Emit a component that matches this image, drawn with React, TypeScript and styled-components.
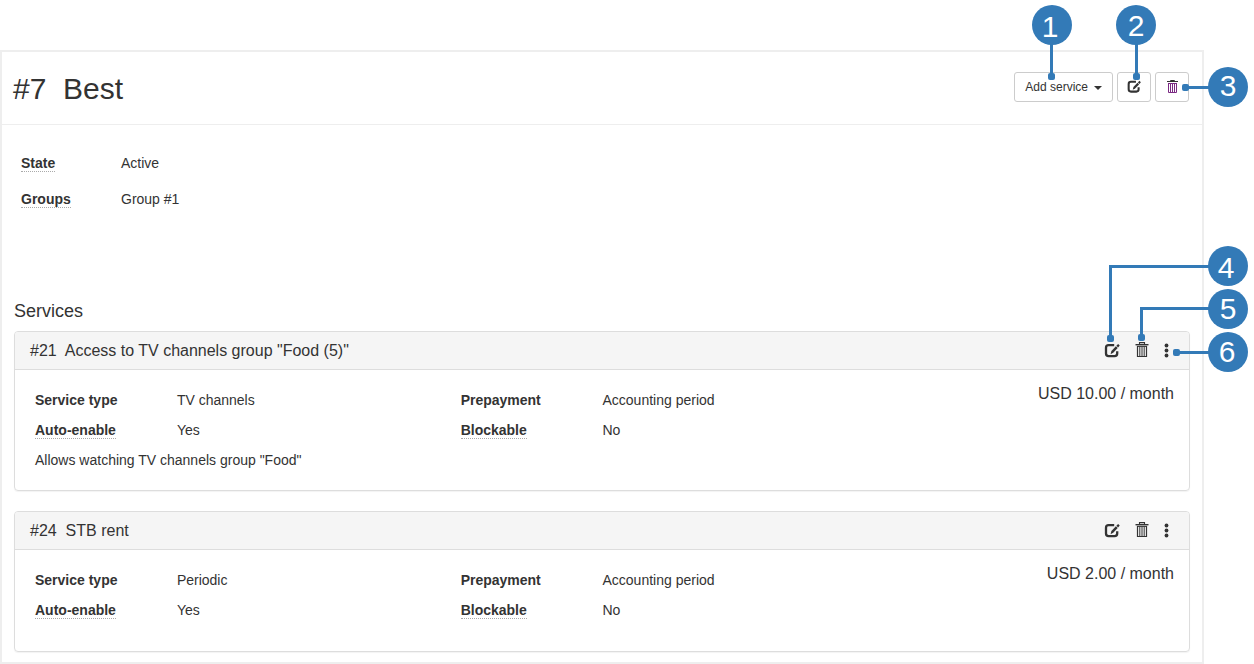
import React from 'react';
import styled, { createGlobalStyle } from 'styled-components';

const GlobalStyle = createGlobalStyle`
  *, *::before, *::after { box-sizing: border-box; }
  body {
    margin: 0;
    background: #fff;
    color: #333;
    font-family: "Liberation Sans", Arial, sans-serif;
    font-size: 14px;
    line-height: 20px;
  }
  button { font-family: inherit; color: inherit; cursor: pointer; }
`;

const Page = styled.div`
  position: relative;
  padding: 50px 50px 0 0;
`;

const Frame = styled.main`
  border: 2px solid #eee;
`;

const Header = styled.header`
  display: flex;
  align-items: flex-start;
  justify-content: space-between;
  padding: 20px 13px 18px 11px;
  border-bottom: 1px solid #eee;
`;

const Title = styled.h1`
  margin: 0;
  font-size: 30px;
  font-weight: 400;
  line-height: 34px;
`;

const Toolbar = styled.div`
  display: flex;
  gap: 4px;
`;

const ToolButton = styled.button<{ $square?: boolean }>`
  display: flex;
  align-items: center;
  justify-content: center;
  height: 30px;
  padding: ${(p) => (p.$square ? '0' : '0 10px')};
  width: ${(p) => (p.$square ? '34px' : 'auto')};
  font-size: 12px;
  line-height: 18px;
  background: #fff;
  border: 1px solid #ccc;
  border-radius: 3px;
`;

const Caret = styled.span`
  margin-left: 6px;
  margin-top: 2px;
  border-top: 4px solid #333;
  border-left: 4px solid transparent;
  border-right: 4px solid transparent;
`;

const Info = styled.dl`
  display: grid;
  grid-template-columns: 100px 1fr;
  align-content: start;
  row-gap: 16px;
  min-height: 176px;
  margin: 0;
  padding: 28px 19px 0;
`;

const Term = styled.dt`
  font-weight: 700;
`;

const Value = styled.dd`
  margin: 0;
`;

const Hint = styled.abbr`
  text-decoration: none;
  border-bottom: 1px dotted #aaa;
  cursor: help;
`;

const Services = styled.section`
  padding: 0 12px 10px;
`;

const SectionTitle = styled.h2`
  margin: 0 0 10px;
  font-size: 18px;
  font-weight: 400;
  line-height: 20px;
`;

const CardList = styled.div`
  display: grid;
  gap: 20px;
`;

const Card = styled.article`
  border: 1px solid #ddd;
  border-radius: 4px;
  box-shadow: 0 1px 1px rgba(0, 0, 0, 0.05);
`;

const CardHeader = styled.div`
  display: flex;
  align-items: center;
  justify-content: space-between;
  height: 38px;
  padding: 1px 20px 0 15px;
  background: #f5f5f5;
  border-bottom: 1px solid #ddd;
  border-radius: 3px 3px 0 0;
`;

const CardTitle = styled.h3`
  margin: 0;
  font-size: 16px;
  font-weight: 400;
  line-height: 20px;
`;

const CardActions = styled.div`
  display: flex;
  align-items: center;
  gap: 12px;
`;

const IconButton = styled.button`
  display: flex;
  padding: 0;
  background: none;
  border: 0;
`;

const CardBody = styled.div`
  display: grid;
  grid-template-columns: 3fr 1fr;
  column-gap: 4px;
  padding: 12px 15px 20px 20px;
`;

const Details = styled.div`
  min-height: 69px;
  padding-top: 8px;
`;

const Fields = styled.dl`
  display: grid;
  grid-template-columns: 1fr 2fr 1fr 2fr;
  row-gap: 10px;
  margin: 0;
`;

const Description = styled.p`
  margin: 10px 0 0;
`;

const Price = styled.div`
  font-size: 16px;
  line-height: 24px;
  text-align: right;
`;

const CalloutLayer = styled.svg`
  position: absolute;
  top: 0;
  right: 0;
  pointer-events: none;
  font-size: 30px;
  font-family: "Liberation Sans", Arial, sans-serif;
`;

const EditIcon = ({ size = 18 }: { size?: number }) => (
  <svg width={size} height={size} viewBox="0 0 18 18" fill="none" aria-hidden="true">
    <path d="M11.2 3.2H5.6Q3 3.2 3 5.8V11.6Q3 14.2 5.6 14.2H11.6Q14.2 14.2 14.2 11.6V9.2" stroke="#333" strokeWidth="2.3" />
    <path d="M7.6 12.2L8.4 8.9L12.9 4.3L14.7 6.1L10.2 10.7Z" fill="#333" />
    <path d="M13.4 3.8L15.1 2L16.7 3.6L15.1 5.6Z" fill="#333" />
  </svg>
);

const TrashIcon = () => (
  <svg width="18" height="18" viewBox="0 0 18 18" fill="none" aria-hidden="true">
    <path d="M6.5 2.2V.6H11.5V2.2" stroke="#333" strokeWidth="1.1" />
    <path d="M2.5 2H15.5V3.4H2.5Z" fill="#333" />
    <path d="M4.5 4V14.5H13.5V4" stroke="#333" strokeWidth="1.2" />
    <path d="M4 4.4H14" stroke="#333" />
    <path d="M6.8 4.5V14.5M9 4.5V14.5M11.2 4.5V14.5" stroke="#333" />
  </svg>
);

// Compact bin with whole-pixel strokes so its ribs stay sharp in small buttons.
const SmallTrashIcon = () => (
  <svg width="16" height="16" viewBox="0 0 16 16" fill="none" aria-hidden="true">
    <path d="M6.5 2V1.5H10.5V2" stroke="#333" />
    <path d="M3 2.5H14" stroke="#333" />
    <path d="M4.5 4V13.5H12.5V4M4 4.5H13M6.5 5V13M8.5 5V13M10.5 5V13" stroke="#7b2a83" />
  </svg>
);

const DotsIcon = () => (
  <svg width="6" height="18" viewBox="0 0 6 18" fill="#333" aria-hidden="true">
    <circle cx="3.5" cy="3.5" r="1.9" />
    <circle cx="3.5" cy="8.5" r="1.9" />
    <circle cx="3.5" cy="13.5" r="1.9" />
  </svg>
);

type Field = { label: string; value: string; hint?: boolean };
type Service = { id: number; name: string; price: string; fields: Field[]; description?: string };

const summary: Field[] = [
  { label: 'State', value: 'Active', hint: true },
  { label: 'Groups', value: 'Group #1', hint: true },
];

const services: Service[] = [
  {
    id: 21,
    name: 'Access to TV channels group "Food (5)"',
    price: 'USD 10.00 / month',
    fields: [
      { label: 'Service type', value: 'TV channels' },
      { label: 'Prepayment', value: 'Accounting period' },
      { label: 'Auto-enable', value: 'Yes', hint: true },
      { label: 'Blockable', value: 'No', hint: true },
    ],
    description: 'Allows watching TV channels group "Food"',
  },
  {
    id: 24,
    name: 'STB rent',
    price: 'USD 2.00 / month',
    fields: [
      { label: 'Service type', value: 'Periodic' },
      { label: 'Prepayment', value: 'Accounting period' },
      { label: 'Auto-enable', value: 'Yes', hint: true },
      { label: 'Blockable', value: 'No', hint: true },
    ],
  },
];

const FieldPairs = ({ fields }: { fields: Field[] }) => (
  <>
    {fields.map((f) => (
      <React.Fragment key={f.label}>
        <Term>{f.hint ? <Hint>{f.label}</Hint> : f.label}</Term>
        <Value>{f.value}</Value>
      </React.Fragment>
    ))}
  </>
);

const ServiceCard = ({ service }: { service: Service }) => (
  <Card>
    <CardHeader>
      <CardTitle>#{service.id}&nbsp; {service.name}</CardTitle>
      <CardActions>
        <IconButton type="button" aria-label="Edit service"><EditIcon /></IconButton>
        <IconButton type="button" aria-label="Delete service"><TrashIcon /></IconButton>
        <IconButton type="button" aria-label="More actions"><DotsIcon /></IconButton>
      </CardActions>
    </CardHeader>
    <CardBody>
      <Details>
        <Fields><FieldPairs fields={service.fields} /></Fields>
        {service.description && <Description>{service.description}</Description>}
      </Details>
      <Price>{service.price}</Price>
    </CardBody>
  </Card>
);

// Each callout: numbered disc, leader line and the end marker on its target.
const callouts = [
  { n: 1, cx: 52, cy: 25, tx: 50, ty: 37, end: [51.5, 76.5], path: 'M51.5 40V76' },
  { n: 2, cx: 136, cy: 25, tx: 136, ty: 36, end: [136.5, 76.5], path: 'M136.5 40V76' },
  { n: 3, cx: 228, cy: 87, tx: 228, ty: 96, end: [185.5, 87.5], path: 'M215 87.5H186' },
  { n: 4, cx: 228, cy: 266, tx: 226, ty: 278, end: [110.5, 338.5], path: 'M215 266.5H110.5V338' },
  { n: 5, cx: 228, cy: 309, tx: 228, ty: 319, end: [141.5, 337.5], path: 'M215 308.5H141.5V337' },
  { n: 6, cx: 228, cy: 352, tx: 227, ty: 362, end: [176.5, 352.5], path: 'M215 352.5H177' },
];

const Callouts = () => (
  <CalloutLayer width="254" height="380" viewBox="0 0 254 380">
    {callouts.map((c) => (
      <g key={c.n} fill="#337ab7">
        <path d={c.path} fill="none" stroke="#337ab7" strokeWidth="3" />
        <rect x={c.end[0] - 3.5} y={c.end[1] - 3.5} width="7" height="7" rx="2" />
        <circle cx={c.cx} cy={c.cy} r="20" />
        <text x={c.tx} y={c.ty} fill="#fff" textAnchor="middle">{c.n}</text>
      </g>
    ))}
  </CalloutLayer>
);

export default function App() {
  return (
    <Page>
      <GlobalStyle />
      <Frame>
        <Header>
          <Title>#7&nbsp; Best</Title>
          <Toolbar>
            <ToolButton type="button">Add service<Caret /></ToolButton>
            <ToolButton type="button" $square aria-label="Edit"><EditIcon size={16} /></ToolButton>
            <ToolButton type="button" $square aria-label="Delete"><SmallTrashIcon /></ToolButton>
          </Toolbar>
        </Header>
        <Info><FieldPairs fields={summary} /></Info>
        <Services>
          <SectionTitle>Services</SectionTitle>
          <CardList>
            {services.map((s) => <ServiceCard key={s.id} service={s} />)}
          </CardList>
        </Services>
      </Frame>
      <Callouts />
    </Page>
  );
}
